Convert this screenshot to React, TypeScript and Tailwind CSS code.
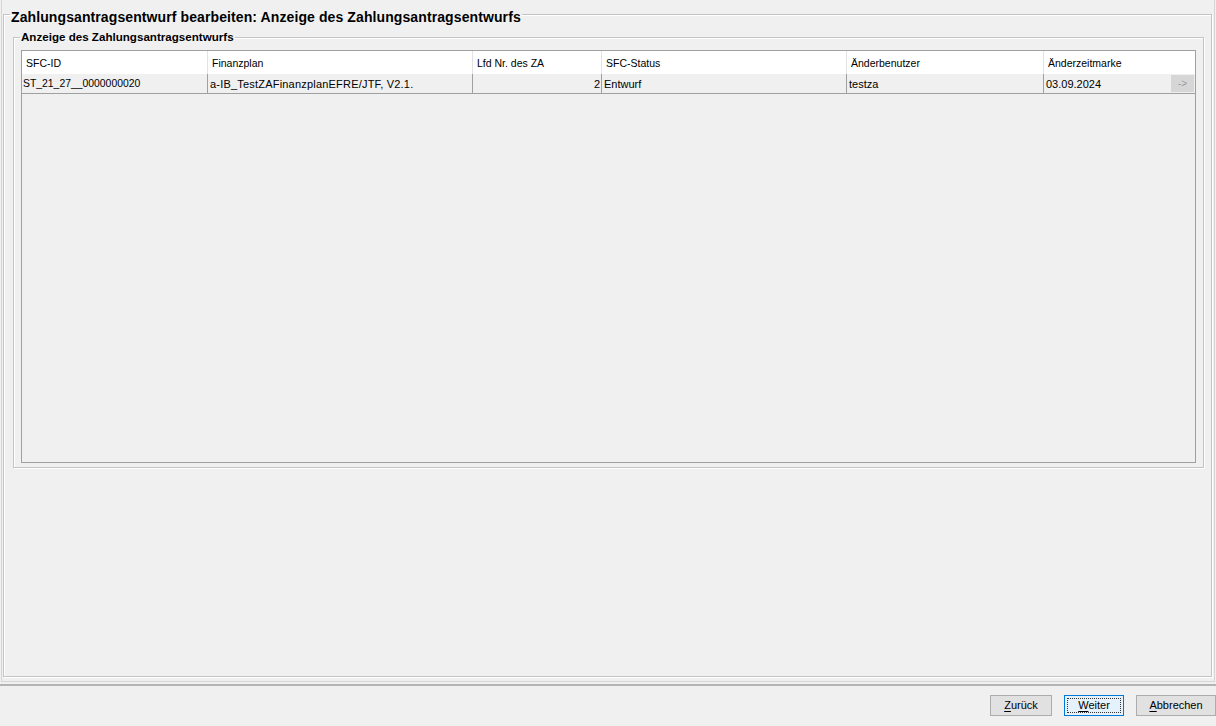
import clsx from 'clsx';

// Spalten der Tabelle (Breiten aus dem Screenshot)
const COLUMNS = [
  { label: 'SFC-ID', key: 'sfcId' },
  { label: 'Finanzplan', key: 'plan' },
  { label: 'Lfd Nr. des ZA', key: 'lfd' },
  { label: 'SFC-Status', key: 'status' },
  { label: 'Änderbenutzer', key: 'user' },
  { label: 'Änderzeitmarke', key: 'date' },
];

const ROWS = [
  {
    sfcId: 'ST_21_27__0000000020',
    plan: 'a-IB_TestZAFinanzplanEFRE/JTF, V2.1.',
    lfd: '2',
    status: 'Entwurf',
    user: 'testza',
    date: '03.09.2024',
  },
];

const GRID = 'grid grid-cols-[186px_265px_129px_245px_197px_1fr]';

function Btn({ mnemonic, rest, width, focused }: { mnemonic: string; rest: string; width: string; focused?: boolean }) {
  return (
    <button
      className={clsx(
        'h-[21px] p-[2px] text-[11px] leading-none text-black flex border',
        width,
        focused ? 'border-[#0078d7] bg-[#e5f1fb]' : 'border-[#adadad] bg-[#e1e1e1]',
      )}
    >
      <span
        className={clsx(
          'flex-1 flex items-center justify-center border',
          focused ? 'border-dotted border-[#333]' : 'border-transparent',
        )}
      >
        <span>
          <span className="underline underline-offset-2">{mnemonic}</span>
          {rest}
        </span>
      </span>
    </button>
  );
}

export default function App() {
  return (
    <div className="w-[1216px] h-[726px] bg-[#f0f0f0] flex flex-col font-['Liberation_Sans','Arial',sans-serif] text-black overflow-hidden">
      {/* Hauptbereich */}
      <div className="h-[682px] mx-[1px] border-x border-b border-[#d6d6d6] px-[1px] pt-[4px]">
        <fieldset className="h-[673px] w-[1209px] border border-[#c4c4c4] shadow-[inset_1px_1px_0_#fff,1px_1px_0_#fff] px-0 pb-0 m-0">
          <legend className="ml-[6px] px-[1px] pt-[5px] text-[14px] font-bold leading-[16px] tracking-[0.1px]">
            Zahlungsantragsentwurf bearbeiten: Anzeige des Zahlungsantragsentwurfs
          </legend>

          <fieldset className="mt-[5px] ml-[9px] w-[1191px] border border-[#c4c4c4] shadow-[inset_1px_1px_0_#fff,1px_1px_0_#fff] px-0 pb-[4px]">
            <legend className="ml-[6px] px-[1px] text-[11.6px] font-bold leading-[14px]">
              Anzeige des Zahlungsantragsentwurfs
            </legend>

            <div className="mt-[6px] ml-[7px] w-[1175px] h-[413px] border border-[#a0a0a0] bg-[#f0f0f0] text-[11px]">
              {/* Kopfzeile */}
              <div className={clsx(GRID, 'h-[23px] bg-white text-[10.5px]')}>
                {COLUMNS.map((c, i) => (
                  <div
                    key={c.key}
                    className={clsx('flex items-center pl-[4px] pt-[2px]', i < COLUMNS.length - 1 && 'border-r border-[#e3e3e3]')}
                  >
                    {c.label}
                  </div>
                ))}
              </div>

              {/* Datenzeilen */}
              {ROWS.map(r => (
                <div key={r.sfcId} className={clsx(GRID, 'h-[20px] border-b border-[#a0a0a0]')}>
                  <div className="flex items-center pl-[1px] pt-[1px] border-r border-[#a0a0a0] text-[10.4px]">{r.sfcId}</div>
                  <div className="flex items-center pl-[2px] pt-[1px] border-r border-[#a0a0a0] tracking-[0.2px]">{r.plan}</div>
                  <div className="flex items-center justify-end pr-[1px] pt-[1px] border-r border-[#a0a0a0]">{r.lfd}</div>
                  <div className="flex items-center pl-[2px] pt-[1px] border-r border-[#a0a0a0]">{r.status}</div>
                  <div className="flex items-center pl-[2px] pt-[1px] border-r border-[#a0a0a0]">{r.user}</div>
                  <div className="flex items-center pl-[2px] pr-[1px] justify-between">
                    <span className="pt-[1px]">{r.date}</span>
                    <span className="w-[23px] h-[17px] bg-[#d6d6d6] text-[#9a9a9a] text-[10px] flex items-center justify-center">
                      -&gt;
                    </span>
                  </div>
                </div>
              ))}
            </div>
          </fieldset>
        </fieldset>
      </div>

      {/* Trennlinie */}
      <div className="h-[4px] border-b-2 border-[#b4b4b4]" />

      {/* Buttons */}
      <div className="flex justify-end items-start gap-[12px] pt-[9px]">
        <Btn mnemonic="Z" rest="urück" width="w-[62px]" />
        <Btn mnemonic="W" rest="eiter" width="w-[60px]" focused />
        <Btn mnemonic="A" rest="bbrechen" width="w-[80px]" />
      </div>
    </div>
  );
}
